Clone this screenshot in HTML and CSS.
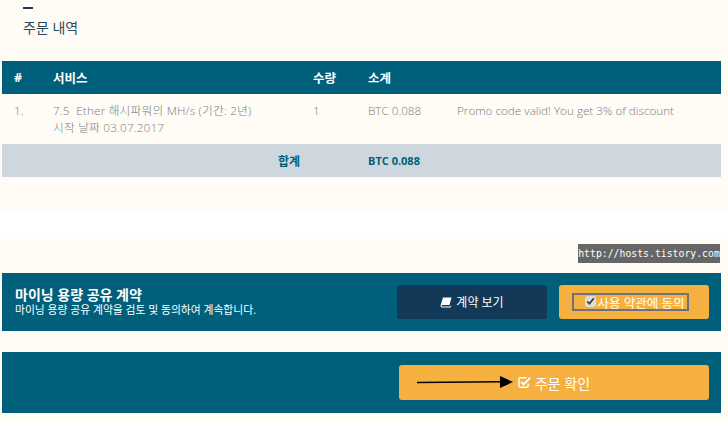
FILE: index.html
```html
<!DOCTYPE html>
<html lang="ko">
<head>
    <meta charset="UTF-8">
    <meta name="viewport" content="width=device-width, initial-scale=1.0">
    <title>주문 내역</title>
    <link rel="stylesheet" href="styles.css">
</head>
<body>
    <section class="summary">
        <div class="title-bar"></div>
        <h2>주문 내역</h2>

        <div class="order-table">
            <div class="row head">
                <div>#</div>
                <div>서비스</div>
                <div>수량</div>
                <div>소계</div>
                <div></div>
            </div>
            <div class="row item">
                <div>1.</div>
                <div class="service">7.5 &nbsp;Ether 해시파워의 MH/s (기간: 2년)<br>시작 날짜 03.07.2017</div>
                <div>1</div>
                <div>BTC 0.088</div>
                <div>Promo code valid! You get 3% of discount</div>
            </div>
            <div class="row total">
                <div class="total-label">합계</div>
                <div>BTC 0.088</div>
                <div></div>
            </div>
        </div>
    </section>

    <div class="gap-white"></div>

    <section class="lower">
        <div class="watermark">http://hosts.tistory.com</div>

        <div class="panel contract">
            <div class="contract-text">
                <h3>마이닝 용량 공유 계약</h3>
                <p>마이닝 용량 공유 계약을 검토 및 동의하여 계속합니다.</p>
            </div>
            <button class="btn btn-dark">
                <svg class="icon" viewBox="0 0 12 12" width="12" height="12">
                    <path d="M3 1.500h8.500L9.500 9H2.600c-.9 0-1.100.6-.9 1s.5.6 1 .6h7.800l.4-1.100.5.3-.6 1.700H2.500C1.200 11.500.4 10.500.6 9.200z" fill="#fff"/>
                </svg>
                계약 보기
            </button>
            <label class="btn btn-orange">
                <span class="agree"><input type="checkbox" checked>사용 약관에 동의</span>
            </label>
        </div>

        <div class="panel order">
            <button class="btn btn-orange btn-order">
                <svg class="icon" viewBox="0 0 14 14" width="13" height="13">
                    <path d="M11 8v2.500A1.500 1.500 0 0 1 9.500 12h-7A1.500 1.500 0 0 1 1 10.500v-7A1.500 1.500 0 0 1 2.500 2H9" fill="none" stroke="#fff" stroke-width="1.600"/>
                    <path d="M3.500 6.500 6 9l7-7" fill="none" stroke="#fff" stroke-width="2.200"/>
                </svg>
                주문 확인
            </button>
            <svg class="arrow" viewBox="0 0 96 14" width="96" height="14">
                <path d="M0 7.500 84 6.800" stroke="#000" stroke-width="1.500"/>
                <path d="M83 1 96 7 83 13z" fill="#000"/>
            </svg>
        </div>
    </section>
</body>
</html>
```

FILE: styles.css
```css
body {
    margin: 0;
    background: #fffbf5;
    font-family: "Open Sans", "Noto Sans CJK KR", sans-serif;
    font-size: 12px;
    color: #777d81;
}

.summary {
    height: 210px;
    padding: 0 7px 0 2px;
    box-sizing: border-box;
    overflow: hidden;
}

.title-bar {
    width: 10px;
    height: 2px;
    margin: 7px 0 0 21px;
    background: #1f3a50;
}

h2 {
    margin: 5px 0 0 21px;
    height: 47px;
    font-size: 14px;
    line-height: 27px;
    font-weight: 400;
    color: #2c4a5e;
}

.row {
    display: grid;
    grid-template-columns: 51px 260px 55px 89px 1fr;
}

.row > div:first-child {
    padding-left: 12px;
}

.head {
    height: 33px;
    align-items: center;
    background: #005f7a;
    color: #fff;
    font-weight: 700;
    font-size: 12.500px;
}

.item {
    height: 50px;
    padding-top: 8px;
    box-sizing: border-box;
    font-size: 11.700px;
    font-weight: 300;
    line-height: 17px;
}

.service {
    letter-spacing: 0.2px;
}

.total {
    grid-template-columns: 366px 89px 1fr;
    height: 33px;
    align-items: center;
    background: #cfd7de;
    color: #005f7a;
    font-weight: 700;
    font-size: 11px;
}

.row .total-label {
    padding-right: 68px;
    text-align: right;
    font-size: 12px;
}

.gap-white {
    height: 29px;
    background: #fff;
}

.lower {
    position: relative;
    padding: 34px 7px 8px 2px;
}

.watermark {
    position: absolute;
    left: 578px;
    top: 5px;
    width: 142px;
    height: 19px;
    background: #666;
    color: #fff;
    font-family: "DejaVu Sans Mono", monospace;
    font-size: 9.800px;
    line-height: 19px;
    text-align: center;
    white-space: nowrap;
}

.panel {
    display: flex;
    align-items: center;
    justify-content: flex-end;
    gap: 12px;
    padding-right: 12px;
    background: #005f7a;
}

.contract {
    height: 58px;
    margin-bottom: 21px;
}

.contract-text {
    flex: 1;
    padding-left: 13px;
    color: #fff;
}

h3 {
    margin: 0;
    font-size: 14px;
    line-height: 14px;
    font-weight: 700;
}

.contract-text p {
    margin: 0;
    font-size: 10.800px;
    line-height: 15px;
}

.btn {
    display: flex;
    align-items: center;
    justify-content: center;
    gap: 4px;
    width: 150px;
    height: 34px;
    box-sizing: border-box;
    border: none;
    border-radius: 3px;
    color: #fff;
    font-family: inherit;
    font-size: 12px;
}

.btn-dark {
    background: #123a58;
}

.btn-orange {
    background: #f6b040;
}

.agree {
    display: flex;
    align-items: center;
    height: 14px;
    margin-right: 8px;
    padding: 0 2px 0 11px;
    border: 1px solid #6f7378;
    outline: 1px solid #6f7378;
    font-size: 12.500px;
    white-space: nowrap;
}

.agree input {
    width: 11px;
    height: 11px;
    margin: 0 2px 2px 0;
    accent-color: #ddd;
}

.order {
    position: relative;
    height: 61px;
}

.btn-order {
    width: 310px;
    height: 35px;
    font-size: 14px;
}

.arrow {
    position: absolute;
    left: 415px;
    top: 23px;
}
```
